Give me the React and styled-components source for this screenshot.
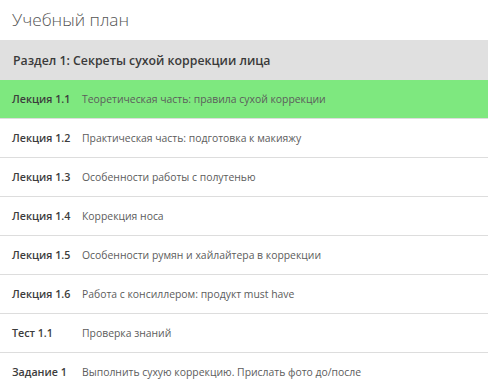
import React from 'react'
import styled, { createGlobalStyle } from 'styled-components'

const GlobalStyle = createGlobalStyle`
  html, body {
    margin: 0;
    padding: 0;
    background: #ffffff;
  }
  body {
    font-family: "Open Sans", "Noto Sans", sans-serif;
  }
`;

const Wrapper = styled.div`
  width: 488px;
  height: 388px;
  overflow: hidden;
  display: flex;
  flex-direction: column;
  & > * {
    flex-shrink: 0;
  }
`;

const Title = styled.div`
  height: 40px;
  padding: 0 0 2px 12px;
  box-sizing: border-box;
  display: flex;
  align-items: center;
  font-size: 17.3px;
  font-weight: 300;
  color: #555555;
`;

const SectionHeader = styled.div`
  height: 40px;
  padding: 0 13px;
  display: flex;
  align-items: center;
  background-color: #e0e0e0;
  font-size: 12.3px;
  font-weight: 600;
  color: #3a3a3a;
`;

const Row = styled.div`
  height: 38px;
  display: flex;
  align-items: center;
  padding: 0 12px;
  border-bottom: 1px solid #dddddd;
  background-color: ${({ active }) => (active ? '#7ee87f' : '#ffffff')};
`;

const Label = styled.div`
  width: 70px;
  flex-shrink: 0;
  font-size: 10.7px;
  font-weight: 600;
  color: #3c3c3c;
`;

const Desc = styled.div`
  font-size: 10.4px;
  font-weight: 400;
  color: #5c5c5c;
  white-space: nowrap;
`;

const lessons = [
  { label: 'Лекция 1.1', text: 'Теоретическая часть: правила сухой коррекции', active: true },
  { label: 'Лекция 1.2', text: 'Практическая часть: подготовка к макияжу' },
  { label: 'Лекция 1.3', text: 'Особенности работы с полутенью' },
  { label: 'Лекция 1.4', text: 'Коррекция носа' },
  { label: 'Лекция 1.5', text: 'Особенности румян и хайлайтера в коррекции' },
  { label: 'Лекция 1.6', text: 'Работа с консиллером: продукт must have' },
  { label: 'Тест 1.1', text: 'Проверка знаний' },
  { label: 'Задание 1', text: 'Выполнить сухую коррекцию. Прислать фото до/после' },
]

const App = () => {
  return (
    <>
      <GlobalStyle />
      <Wrapper>
        <Title>Учебный план</Title>
        <SectionHeader>Раздел 1: Секреты сухой коррекции лица</SectionHeader>
        {lessons.map((item, index) => (
          <Row key={index} active={item.active}>
            <Label>{item.label}</Label>
            <Desc>{item.text}</Desc>
          </Row>
        ))}
      </Wrapper>
    </>
  )
}

export default App
